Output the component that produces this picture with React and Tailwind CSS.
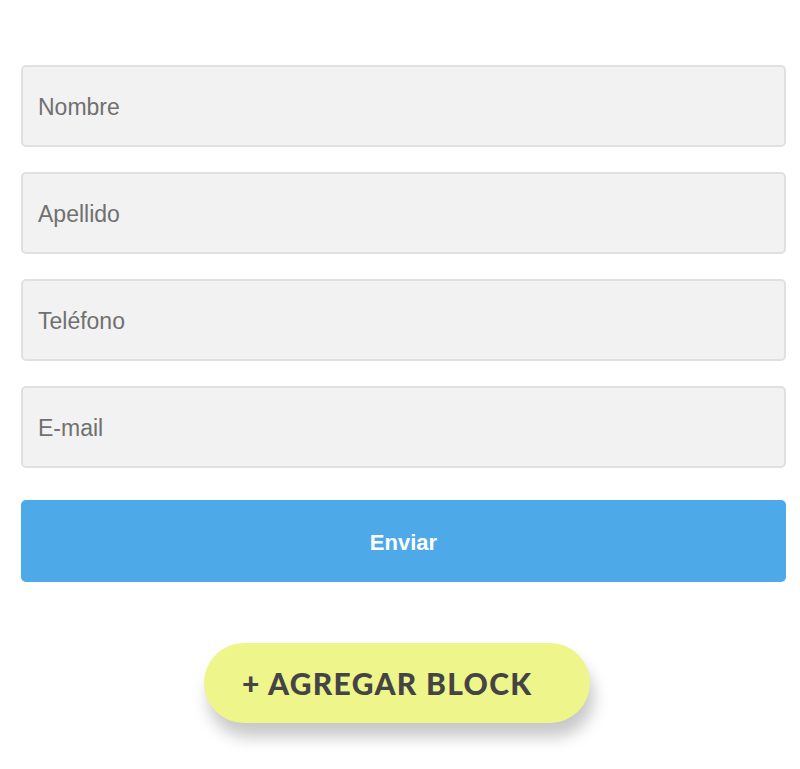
export default function App() {
  const fields = ["Nombre", "Apellido", "Teléfono", "E-mail"];
  return (
    <div className="w-[800px] h-[769px] bg-white overflow-hidden font-['Liberation_Sans',Arial,sans-serif]">
      <div className="pt-[65px] px-[21px] pr-[14px] flex flex-col gap-[25px]">
        {fields.map((f) => (
          <div
            key={f}
            className="h-[82px] rounded-[5px] border-2 border-[#e0e0e0] bg-[#f2f2f2] flex items-center pl-[15px] pt-[2px] text-[23px] text-[#707070]"
          >
            {f}
          </div>
        ))}
      </div>
      <div className="px-[21px] pr-[14px] mt-[32px]">
        <div className="h-[82px] rounded-[5px] bg-[#4da9e8] flex items-center justify-center pt-[2px] text-white font-bold text-[22px]">
          Enviar
        </div>
      </div>
      <div className="flex justify-center mt-[61px] pl-[8px] pr-[14px]">
        <div className="w-[386px] h-[80px] rounded-full bg-[#eef58a] flex items-center pl-[38px] text-[30px] font-black tracking-[1.3px] text-[#444444] shadow-[4px_14px_16px_rgba(0,0,0,0.22)] font-['Lato','Open_Sans',sans-serif]">
          + AGREGAR BLOCK
        </div>
      </div>
    </div>
  );
}
